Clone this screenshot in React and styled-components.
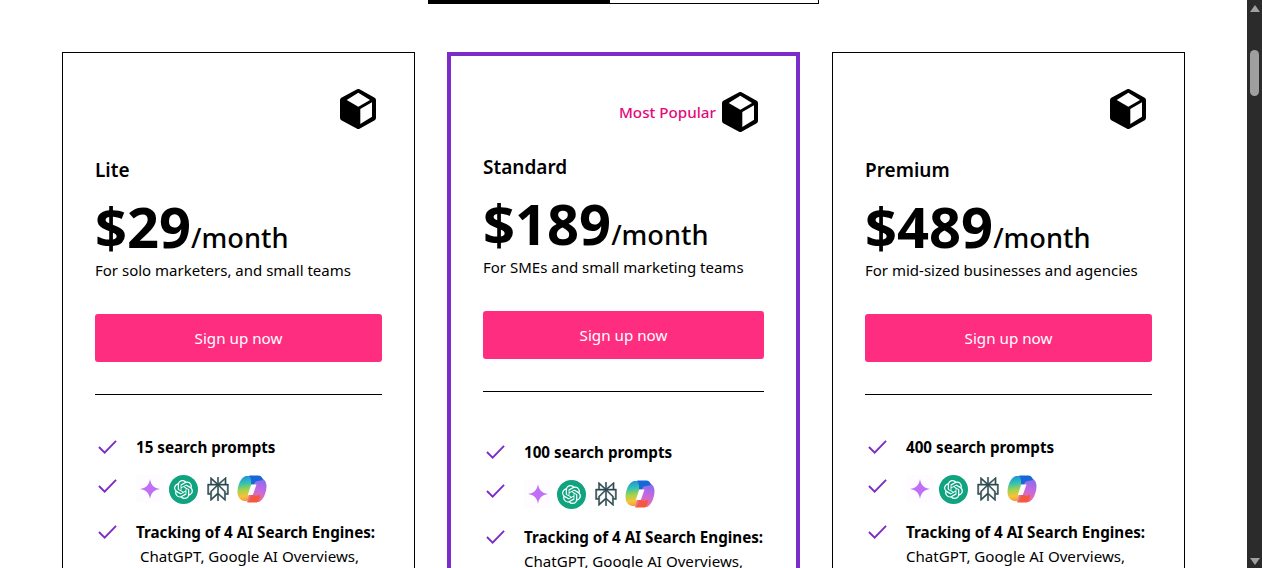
import React from 'react'
import styled, { createGlobalStyle } from 'styled-components'
import { SiOpenai, SiPerplexity } from 'react-icons/si'

const GlobalStyle = createGlobalStyle`
    html, body {
        margin: 0;
        height: 100%;
        overflow: hidden;
        background: #fff;
    }
    * { box-sizing: border-box; }
`

const plans = [
    { name: 'Lite', price: '$29', blurb: 'For solo marketers, and small teams', prompts: '15 search prompts', indent: true },
    { name: 'Standard', price: '$189', blurb: 'For SMEs and small marketing teams', prompts: '100 search prompts', featured: true },
    { name: 'Premium', price: '$489', blurb: 'For mid-sized businesses and agencies', prompts: '400 search prompts' },
]

function Cube() {
    return (
        <CubeIcon viewBox="0 0 37 40" aria-hidden="true">
            <path d="M18.3 2.5 L33.5 11 V29 L18.3 37.5 L2.5 29 V11 Z" fill="#000" stroke="#000" strokeWidth="5" strokeLinejoin="round" />
            <path d="M18.3 3.8 L30 11 L18.3 17.8 L6.7 11 Z" fill="#fff" />
            <path d="M20.3 20 L32 13.3 V27.7 L20.3 35 Z" fill="#fff" />
        </CubeIcon>
    )
}

function Check() {
    return (
        <CheckIcon viewBox="0 0 20 16" aria-hidden="true">
            <path d="M1 8 L7 14 L19 1.5" fill="none" stroke="#7b2cc9" strokeWidth="2" />
        </CheckIcon>
    )
}

function Gemini() {
    return (
        <SparkBox>
            <svg viewBox="0 0 20 20" width="20" height="20" aria-hidden="true">
                <path d="M10 0 C10.8 6 14 9.2 20 10 C14 10.8 10.8 14 10 20 C9.2 14 6 10.8 0 10 C6 9.2 9.2 6 10 0 Z" fill="#c06ef5" />
            </svg>
        </SparkBox>
    )
}

function Copilot({ id }) {
    return (
        <svg viewBox="0 0 30 30" width="30" height="30" aria-hidden="true">
            <defs>
                <linearGradient id={`${id}-l`} x1="0.3" y1="0" x2="0.4" y2="1">
                    <stop offset="0" stopColor="#1f8fe0" />
                    <stop offset="0.3" stopColor="#35c3b0" />
                    <stop offset="0.55" stopColor="#a5d24a" />
                    <stop offset="0.8" stopColor="#f5c33b" />
                    <stop offset="1" stopColor="#f59a3a" />
                </linearGradient>
                <linearGradient id={`${id}-r`} x1="0.6" y1="0" x2="0.4" y2="1">
                    <stop offset="0" stopColor="#7b6ff0" />
                    <stop offset="0.5" stopColor="#c668e0" />
                    <stop offset="1" stopColor="#f0708a" />
                </linearGradient>
            </defs>
            <path d="M9 2 H20 L13 24 C12 26.5 10 27.5 7 27 C3 26 0.5 23 0.5 18 C0.5 11 4 3 9 2 Z" fill={`url(#${id}-l)`} />
            <path d="M22 3 C26 4 29.5 7 29.5 12 C29.5 19 26 26 22 28 H10 L17 6 C18 4 20 3 22 3 Z" fill={`url(#${id}-r)`} />
            <path d="M12 1.5 H21 C24 1.5 25.5 3.5 26 6 L21 7 C18.5 7 17.5 8.5 17 10.5 H14 C14.5 6 13.5 3 12 1.5 Z" fill="#1668d8" />
            <path d="M10 28.5 C12.5 27 13.5 24.5 14 21 H16 C18 22 20 22 23 21 C23 24 22 27 20 28.5 Z" fill="#f5573f" />
            <path d="M14.2 10.5 H19.5 L15.8 21 H10.8 Z" fill="#fff" />
        </svg>
    )
}

function Plan({ plan }) {
    return (
        <Card $featured={plan.featured}>
            <BadgeRow $featured={plan.featured}>
                {plan.featured && <Badge>Most Popular</Badge>}
                <Cube />
            </BadgeRow>
            <PlanName>{plan.name}</PlanName>
            <Price>{plan.price}<Period>/month</Period></Price>
            <Blurb>{plan.blurb}</Blurb>
            <SignUp>Sign up now</SignUp>
            <Divider />
            <Features $featured={plan.featured}>
                <Feature>
                    <Check />
                    <strong>{plan.prompts}</strong>
                </Feature>
                <Feature>
                    <Check />
                    <Engines>
                        <Gemini />
                        <OpenAiBadge><SiOpenai size={19} /></OpenAiBadge>
                        <PerplexityMark><SiPerplexity size={24} /></PerplexityMark>
                        <Copilot id={plan.name} />
                    </Engines>
                </Feature>
                <Feature>
                    <Check />
                    <div>
                        <strong>Tracking of 4 AI Search Engines:</strong>
                        <EngineList $indent={plan.indent}>ChatGPT, Google AI Overviews,</EngineList>
                    </div>
                </Feature>
            </Features>
        </Card>
    )
}

export default function App() {
    return (
        <Page>
            <GlobalStyle />
            <Main>
                <Tabs>
                    <Tab $active />
                    <Tab />
                </Tabs>
                <Cards>
                    {plans.map(plan => <Plan key={plan.name} plan={plan} />)}
                </Cards>
            </Main>
            <Scrollbar>
                <Arrow />
                <Thumb />
                <Arrow $down />
            </Scrollbar>
        </Page>
    )
}

const Page = styled.div`
    display: flex;
    height: 100vh;
    font-family: "Noto Sans", "Open Sans", sans-serif;
    color: #000;
`

const Main = styled.main`
    flex: 1;
    min-width: 0;
    height: 100%;
    overflow: hidden;
`

const Tabs = styled.div`
    display: flex;
    width: 391px;
    height: 4px;
    margin: 0 0 48px 428px;
    border: solid #000;
    border-width: 0 1px 1px 1px;
`

const Tab = styled.div`
    flex: ${props => props.$active ? '0 0 181px' : '1'};
    background: ${props => props.$active ? '#000' : 'transparent'};
`

const Cards = styled.div`
    display: grid;
    grid-template-columns: repeat(3, 353px);
    gap: 32px;
    padding-left: 62px;
`

const Card = styled.section`
    padding: 32px;
    border: ${props => props.$featured ? '4px solid #7b2cc9' : '1px solid #000'};
`

const BadgeRow = styled.div`
    display: flex;
    justify-content: flex-end;
    align-items: center;
    gap: 6px;
    height: 48px;
    padding-right: 5px;
    margin-bottom: ${props => props.$featured ? '19px' : '25px'};
`

const CubeIcon = styled.svg`
    width: 37px;
    height: 40px;
    flex: none;
`

const Badge = styled.span`
    font-size: 15.2px;
    font-weight: 500;
    color: #e6097a;
`

const PlanName = styled.div`
    font-size: 19px;
    font-weight: 600;
    line-height: 24px;
`

const Price = styled.div`
    margin-top: 17px;
    font-size: 56px;
    font-weight: 700;
    line-height: 54px;
`

const Period = styled.span`
    font-size: 27.2px;
    font-weight: 500;
    line-height: 1;
`

const Blurb = styled.div`
    margin-top: 7px;
    font-size: 15px;
    line-height: 20px;
`

const SignUp = styled.button`
    display: block;
    width: 100%;
    height: 48px;
    margin-top: 34px;
    border: 0;
    border-radius: 3px;
    background: #ff2d80;
    color: #fff;
    font: inherit;
    font-size: 15.2px;
`

const Divider = styled.hr`
    margin: 32px 0 0;
    border: 0;
    border-top: 1px solid #000;
`

const Features = styled.div`
    display: flex;
    flex-direction: column;
    gap: 15px;
    margin-top: ${props => props.$featured ? '48px' : '40px'};
`

const Feature = styled.div`
    display: flex;
    align-items: flex-start;
    gap: 19px;
    font-size: 15.1px;
    line-height: 24px;

    strong { font-size: 15.2px; font-weight: 700; }
`

const CheckIcon = styled.svg`
    flex: none;
    width: 19px;
    height: 16px;
    margin: 4px 0 0 3px;
`

const Engines = styled.div`
    display: flex;
    align-items: center;
    gap: 5px;
    height: 30px;
    margin-bottom: 1px;
`

const SparkBox = styled.div`
    display: flex;
    align-items: center;
    justify-content: center;
    width: 28px;
    height: 28px;
    background: #fefcff;
`

const OpenAiBadge = styled.div`
    display: flex;
    align-items: center;
    justify-content: center;
    width: 29px;
    height: 29px;
    border-radius: 50%;
    background: #10a37f;
    color: #fff;
`

const PerplexityMark = styled.div`
    display: flex;
    padding: 0 2px 0 3px;
    color: #2c4a50;

    svg {
        stroke: currentColor;
        stroke-width: 0.5;
    }
`

const EngineList = styled.div`
    padding-left: ${props => props.$indent ? '4px' : '0'};
    font-weight: 400;
`

const Scrollbar = styled.aside`
    display: flex;
    flex: 0 0 15px;
    flex-direction: column;
    align-items: center;
    background: #2b2b2b;
    padding: 5px 0 3px;
`

const Arrow = styled.div`
    width: 0;
    height: 0;
    border-left: 5px solid transparent;
    border-right: 5px solid transparent;
    ${props => props.$down
        ? 'border-top: 7px solid #a0a0a0; margin-top: auto;'
        : 'border-bottom: 7px solid #a0a0a0;'}
`

const Thumb = styled.div`
    width: 9px;
    height: 46px;
    margin-top: 38px;
    border-radius: 5px;
    background: #9f9f9f;
`
